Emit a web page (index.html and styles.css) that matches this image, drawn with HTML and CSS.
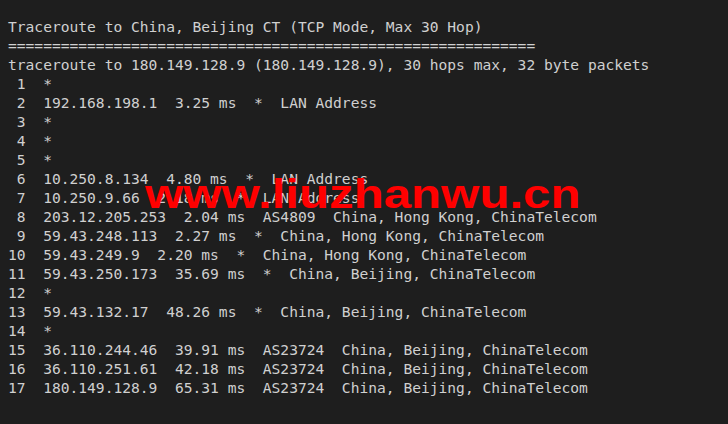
FILE: index.html
```html
<!DOCTYPE html>
<html>
<head>
<meta charset="utf-8">
<link rel="stylesheet" href="styles.css">
</head>
<body>
<div class="term">
<pre class="out">Traceroute to China, Beijing CT (TCP Mode, Max 30 Hop)
============================================================
traceroute to 180.149.128.9 (180.149.128.9), 30 hops max, 32 byte packets
 1  *
 2  192.168.198.1  3.25 ms  *  LAN Address
 3  *
 4  *
 5  *
 6  10.250.8.134  4.80 ms  *  LAN Address
 7  10.250.9.66  2.18 ms  *  LAN Address
 8  203.12.205.253  2.04 ms  AS4809  China, Hong Kong, ChinaTelecom
 9  59.43.248.113  2.27 ms  *  China, Hong Kong, ChinaTelecom
10  59.43.249.9  2.20 ms  *  China, Hong Kong, ChinaTelecom
11  59.43.250.173  35.69 ms  *  China, Beijing, ChinaTelecom
12  *
13  59.43.132.17  48.26 ms  *  China, Beijing, ChinaTelecom
14  *
15  36.110.244.46  39.91 ms  AS23724  China, Beijing, ChinaTelecom
16  36.110.251.61  42.18 ms  AS23724  China, Beijing, ChinaTelecom
17  180.149.128.9  65.31 ms  AS23724  China, Beijing, ChinaTelecom</pre>
<div class="watermark">www.liuzhanwu.cn</div>
</div>
</body>
</html>
```
FILE: styles.css
```css
html, body {
  margin: 0;
  padding: 0;
  background: #1e1e1e;
}
.term {
  position: relative;
  width: 728px;
  height: 424px;
  background: #1e1e1e;
  overflow: hidden;
}
.out {
  margin: 0;
  padding: 17px 8px 0 8px;
  font-family: "DejaVu Sans Mono", "Liberation Mono", monospace;
  font-size: 14.6px;
  line-height: 19px;
  color: #d0d0d0;
}
.watermark {
  position: absolute;
  left: 145px;
  top: 174px;
  font-family: "Liberation Sans", Arial, sans-serif;
  font-weight: bold;
  font-size: 41px;
  line-height: 1;
  color: #ff0000;
  white-space: nowrap;
  transform: scaleX(1.2);
  transform-origin: left top;
}
```
